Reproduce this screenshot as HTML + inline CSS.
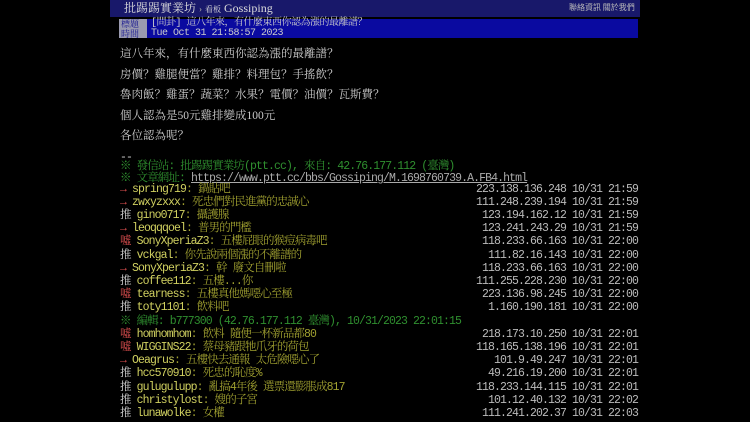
<!DOCTYPE html>
<html><head><meta charset="utf-8"><style>
body{margin:0;width:750px;height:422px;background:#000;overflow:hidden;position:relative;font-family:"Liberation Serif","Noto Serif CJK SC","Noto Sans CJK TC",serif;}
.a{position:absolute;white-space:pre;}
.m{font-family:"Liberation Mono","Noto Serif CJK SC",monospace;font-size:11.5px;letter-spacing:-0.9px;line-height:13px;}
.t{color:#ddd}.r{color:#e05050}.u{color:#d0d060}.c{color:#a0a030}.g{color:#2f8f2f}.ip{color:#bbb;right:112px}
</style></head><body>
<div class="a" style="left:110px;top:0;width:530px;height:17px;background:#18186a"></div>
<div class="a" style="left:124px;top:1px;font-size:12px;line-height:14px;color:#ddd;font-family:'Liberation Serif','Noto Serif CJK SC',serif">批踢踢實業坊 <span style="font-size:9px;color:#aaa">›</span> <span style="font-size:8px">看板</span> Gossiping</div>
<div class="a" style="left:569px;top:3px;font-size:8px;line-height:10px;color:#bbb;font-family:'Noto Sans CJK TC',sans-serif">聯絡資訊 關於我們</div>
<div class="a" style="left:119px;top:19px;width:519px;height:19px;background:#0a0aa0"></div>
<div class="a" style="left:119px;top:19px;width:28px;height:19px;background:#9a9ab0"></div>
<div class="a" style="left:121px;top:19px;color:#1a1a90;font-size:9px;line-height:9.5px;font-family:'Noto Serif CJK SC',serif">標題<br>時間</div>
<div class="a m" style="left:151px;top:19px;color:#ccc;line-height:9.5px;font-size:10px;letter-spacing:-0.5px">[問卦] 這八年來，有什麼東西你認為漲的最離譜？
Tue Oct 31 21:58:57 2023</div>
<div class="a" style="left:120px;top:44px;font-size:11.5px;color:#ccc;line-height:20.6px;font-family:'Liberation Serif','Noto Serif CJK SC',serif">這八年來，有什麼東西你認為漲的最離譜？
房價？雞腿便當？雞排？料理包？手搖飲？
魯肉飯？雞蛋？蔬菜？水果？電價？油價？瓦斯費？
個人認為是50元雞排變成100元
各位認為呢？</div>
<div class="a m" style="left:120px;top:151px;color:#ccc">--</div>
<div class="a m g" style="left:120px;top:160px">※ 發信站: 批踢踢實業坊(ptt.cc), 來自: 42.76.177.112 (臺灣)</div>
<div class="a m g" style="left:120px;top:172px">※ 文章網址: <span style="text-decoration:underline;color:#aaa">https://www.ptt.cc/bbs/Gossiping/M.1698760739.A.FB4.html</span></div>
<div class="a m r" style="left:120px;top:182.5px">→ <span class="u">spring719</span><span class="c">: 鍋貼吧</span></div><div class="a m ip" style="top:182.5px">223.138.136.248 10/31 21:59</div>
<div class="a m r" style="left:120px;top:195.7px">→ <span class="u">zwxyzxxx</span><span class="c">: 死忠們對民進黨的忠誠心</span></div><div class="a m ip" style="top:195.7px">111.248.239.194 10/31 21:59</div>
<div class="a m t" style="left:120px;top:208.9px">推 <span class="u">gino0717</span><span class="c">: 攝護腺</span></div><div class="a m ip" style="top:208.9px">123.194.162.12 10/31 21:59</div>
<div class="a m r" style="left:120px;top:222.1px">→ <span class="u">leoqqqoel</span><span class="c">: 普男的門檻</span></div><div class="a m ip" style="top:222.1px">123.241.243.29 10/31 21:59</div>
<div class="a m r" style="left:120px;top:235.3px">噓 <span class="u">SonyXperiaZ3</span><span class="c">: 五樓屁眼的猴痘病毒吧</span></div><div class="a m ip" style="top:235.3px">118.233.66.163 10/31 22:00</div>
<div class="a m t" style="left:120px;top:248.5px">推 <span class="u">vckgal</span><span class="c">: 你先說兩個漲的不離譜的</span></div><div class="a m ip" style="top:248.5px">111.82.16.143 10/31 22:00</div>
<div class="a m r" style="left:120px;top:261.7px">→ <span class="u">SonyXperiaZ3</span><span class="c">: 幹 廢文自刪啦</span></div><div class="a m ip" style="top:261.7px">118.233.66.163 10/31 22:00</div>
<div class="a m t" style="left:120px;top:274.9px">推 <span class="u">coffee112</span><span class="c">: 五樓...你</span></div><div class="a m ip" style="top:274.9px">111.255.228.230 10/31 22:00</div>
<div class="a m r" style="left:120px;top:288.1px">噓 <span class="u">tearness</span><span class="c">: 五樓真他媽噁心至極</span></div><div class="a m ip" style="top:288.1px">223.136.98.245 10/31 22:00</div>
<div class="a m t" style="left:120px;top:301.3px">推 <span class="u">toty1101</span><span class="c">: 飲料吧</span></div><div class="a m ip" style="top:301.3px">1.160.190.181 10/31 22:00</div>
<div class="a m g" style="left:120px;top:314.5px">※ 編輯: b777300 (42.76.177.112 臺灣), 10/31/2023 22:01:15</div>
<div class="a m r" style="left:120px;top:327.7px">噓 <span class="u">homhomhom</span><span class="c">: 飲料 隨便一杯新品都80</span></div><div class="a m ip" style="top:327.7px">218.173.10.250 10/31 22:01</div>
<div class="a m r" style="left:120px;top:340.9px">噓 <span class="u">WIGGINS22</span><span class="c">: 蔡母豬跟牠爪牙的荷包</span></div><div class="a m ip" style="top:340.9px">118.165.138.196 10/31 22:01</div>
<div class="a m r" style="left:120px;top:354.1px">→ <span class="u">Oeagrus</span><span class="c">: 五樓快去通報 太危險噁心了</span></div><div class="a m ip" style="top:354.1px">101.9.49.247 10/31 22:01</div>
<div class="a m t" style="left:120px;top:367.3px">推 <span class="u">hcc570910</span><span class="c">: 死忠的恥度%</span></div><div class="a m ip" style="top:367.3px">49.216.19.200 10/31 22:01</div>
<div class="a m t" style="left:120px;top:380.5px">推 <span class="u">gulugulupp</span><span class="c">: 亂搞4年後 選票還膨脹成817</span></div><div class="a m ip" style="top:380.5px">118.233.144.115 10/31 22:01</div>
<div class="a m t" style="left:120px;top:393.7px">推 <span class="u">christylost</span><span class="c">: 嫂的子宮</span></div><div class="a m ip" style="top:393.7px">101.12.40.132 10/31 22:02</div>
<div class="a m t" style="left:120px;top:406.9px">推 <span class="u">lunawolke</span><span class="c">: 女權</span></div><div class="a m ip" style="top:406.9px">111.241.202.37 10/31 22:03</div>
</body></html>
